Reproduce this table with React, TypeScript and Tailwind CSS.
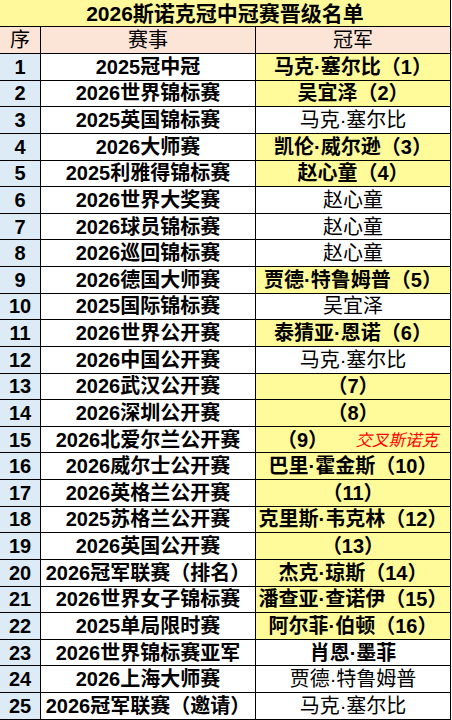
const rows: { event: string; champ: string; hl: boolean; bold?: boolean; note?: string }[] = [
  { event: '2025冠中冠', champ: '马克·塞尔比（1）', hl: true },
  { event: '2026世界锦标赛', champ: '吴宜泽（2）', hl: true },
  { event: '2025英国锦标赛', champ: '马克·塞尔比', hl: false },
  { event: '2026大师赛', champ: '凯伦·威尔逊（3）', hl: true },
  { event: '2025利雅得锦标赛', champ: '赵心童（4）', hl: true },
  { event: '2026世界大奖赛', champ: '赵心童', hl: false },
  { event: '2026球员锦标赛', champ: '赵心童', hl: false },
  { event: '2026巡回锦标赛', champ: '赵心童', hl: false },
  { event: '2026德国大师赛', champ: '贾德·特鲁姆普（5）', hl: true },
  { event: '2025国际锦标赛', champ: '吴宜泽', hl: false },
  { event: '2026世界公开赛', champ: '泰猜亚·恩诺（6）', hl: true },
  { event: '2026中国公开赛', champ: '马克·塞尔比', hl: false },
  { event: '2026武汉公开赛', champ: '（7）', hl: true },
  { event: '2026深圳公开赛', champ: '（8）', hl: true },
  { event: '2026北爱尔兰公开赛', champ: '（9）', hl: true, note: '交叉斯诺克' },
  { event: '2026威尔士公开赛', champ: '巴里·霍金斯（10）', hl: true },
  { event: '2026英格兰公开赛', champ: '（11）', hl: true },
  { event: '2025苏格兰公开赛', champ: '克里斯·韦克林（12）', hl: true },
  { event: '2026英国公开赛', champ: '（13）', hl: true },
  { event: '2026冠军联赛（排名）', champ: '杰克·琼斯（14）', hl: true },
  { event: '2026世界女子锦标赛', champ: '潘查亚·查诺伊（15）', hl: true },
  { event: '2025单局限时赛', champ: '阿尔菲·伯顿（16）', hl: true },
  { event: '2026世界锦标赛亚军', champ: '肖恩·墨菲', hl: false, bold: true },
  { event: '2026上海大师赛', champ: '贾德·特鲁姆普', hl: false },
  { event: '2026冠军联赛（邀请）', champ: '马克·塞尔比', hl: false },
];

export default function App() {
  return (
    <div className="w-[452px] h-[720px] overflow-hidden bg-white text-black font-['Liberation_Sans','Noto_Sans_CJK_SC',sans-serif]">
      {/* Title */}
      <div className="h-[27px] flex items-center justify-center bg-[#FFF99B] border-b border-r border-black w-[451px] text-[21px] font-semibold leading-none">
        2026斯诺克冠中冠赛晋级名单
      </div>

      {/* Header */}
      <div className="grid grid-cols-[41px_215px_195px] h-[27px] bg-[#FCE4D6] text-[20px] leading-none">
        <div className="flex items-center justify-center border-r border-b border-black">序</div>
        <div className="flex items-center justify-center border-r border-b border-black">赛事</div>
        <div className="flex items-center justify-center border-r border-b border-black">冠军</div>
      </div>

      {rows.map((r, i) => (
        <div key={i} className="grid grid-cols-[41px_215px_195px] h-[26.64px] text-[20px] leading-none">
          <div className="flex items-center justify-center border-r border-b border-black bg-[#DDEBF7] font-semibold">
            {i + 1}
          </div>
          <div className="flex items-center justify-center border-r border-b border-black font-semibold whitespace-nowrap">
            {r.event}
          </div>
          {r.note ? (
            <div className="flex items-center justify-between pl-[21px] pr-[12px] border-r border-b border-black bg-[#FFFB9B] whitespace-nowrap">
              <span className="font-semibold">{r.champ}</span>
              <span className="text-[#FF0000] italic text-[16.5px] pt-[2px]">{r.note}</span>
            </div>
          ) : (
            <div
              className={
                'flex items-center justify-center border-r border-b border-black whitespace-nowrap ' +
                (r.hl ? 'bg-[#FFFB9B] font-semibold' : r.bold ? 'font-semibold' : 'font-normal')
              }
            >
              {r.champ}
            </div>
          )}
        </div>
      ))}
    </div>
  );
}
